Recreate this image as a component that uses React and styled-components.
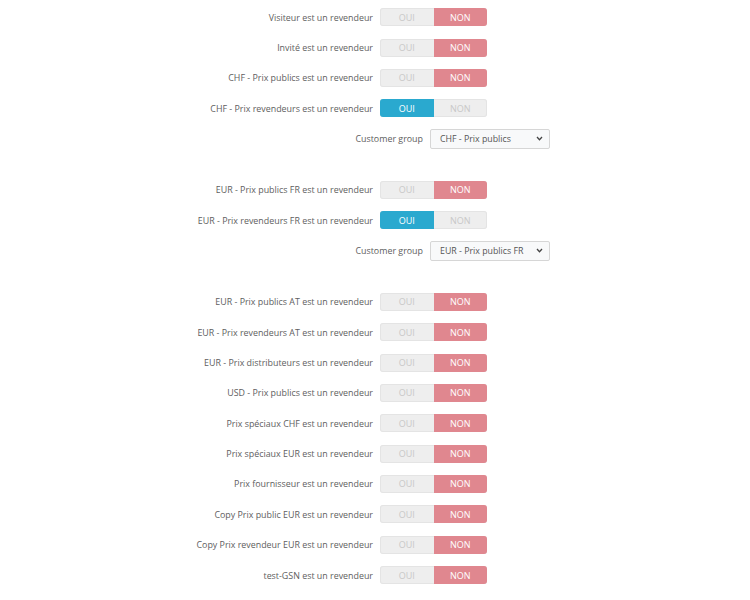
import * as React from "react";
import styled, {createGlobalStyle} from "styled-components";

const Global = createGlobalStyle`
    body {
        margin: 0;
        background: #ffffff;
        font-family: "Open Sans", "Liberation Sans", sans-serif;
    }
`;

const Page = styled.div`
    width: 750px;
    height: 600px;
    padding-top: 2px;
    box-sizing: border-box;
    overflow: hidden;
`;

const Group = styled.div`
    display: flex;
    flex-direction: column;
    margin-bottom: ${(p) => (p.$last ? 0 : "21px")};
`;

const Row = styled.div`
    display: flex;
    align-items: center;
    height: 30.35px;
`;

const Label = styled.div`
    width: ${(p) => p.$width}px;
    padding-right: 7px;
    box-sizing: border-box;
    text-align: right;
    font-size: 8.9px;
    color: #606060;
    white-space: nowrap;
`;

const Switch = styled.div`
    display: flex;
    width: 107px;
    height: 18px;
    border-radius: 3px;
    overflow: hidden;
    background: #eeeeee;
    box-shadow: inset 0 0 0 1px #e4e4e4;
`;

const Half = styled.div`
    flex: 1;
    display: flex;
    align-items: center;
    justify-content: center;
    font-size: 9px;
    color: ${(p) => (p.$on ? "#ffffff" : "#c8c8c8")};
    background: ${(p) => (p.$on ? p.$color : "transparent")};
`;

const Select = styled.div`
    display: flex;
    align-items: center;
    justify-content: space-between;
    width: 120px;
    height: 20px;
    padding: 0 6px 0 9px;
    box-sizing: border-box;
    border: 1px solid #d6d6d6;
    border-radius: 2px;
    background: #f8f9fa;
    font-size: 8.8px;
    color: #555555;
`;

const ToggleRow = ({label, yes}) => (
    <Row>
        <Label $width={380}>{label}</Label>
        <Switch>
            <Half $on={yes} $color="#2aa9cf">OUI</Half>
            <Half $on={!yes} $color="#e0878f">NON</Half>
        </Switch>
    </Row>
);

const SelectRow = ({value}) => (
    <Row>
        <Label $width={430}>Customer group</Label>
        <Select>
            <span>{value}</span>
            <svg width="7" height="5" viewBox="0 0 7 5">
                <path d="M1 1 L3.5 3.7 L6 1" fill="none" stroke="#444" strokeWidth="1.3"/>
            </svg>
        </Select>
    </Row>
);

const lastGroup = [
    "EUR - Prix publics AT est un revendeur",
    "EUR - Prix revendeurs AT est un revendeur",
    "EUR - Prix distributeurs est un revendeur",
    "USD - Prix publics est un revendeur",
    "Prix spéciaux CHF est un revendeur",
    "Prix spéciaux EUR est un revendeur",
    "Prix fournisseur est un revendeur",
    "Copy Prix public EUR est un revendeur",
    "Copy Prix revendeur EUR est un revendeur",
    "test-GSN est un revendeur",
];

export default function App() {
    return (
        <Page>
            <Global/>
            <Group>
                <ToggleRow label="Visiteur est un revendeur"/>
                <ToggleRow label="Invité est un revendeur"/>
                <ToggleRow label="CHF - Prix publics est un revendeur"/>
                <ToggleRow label="CHF - Prix revendeurs est un revendeur" yes/>
                <SelectRow value="CHF - Prix publics"/>
            </Group>
            <Group>
                <ToggleRow label="EUR - Prix publics FR est un revendeur"/>
                <ToggleRow label="EUR - Prix revendeurs FR est un revendeur" yes/>
                <SelectRow value="EUR - Prix publics FR"/>
            </Group>
            <Group $last>
                {lastGroup.map((l) => <ToggleRow key={l} label={l}/>)}
            </Group>
        </Page>
    );
}
